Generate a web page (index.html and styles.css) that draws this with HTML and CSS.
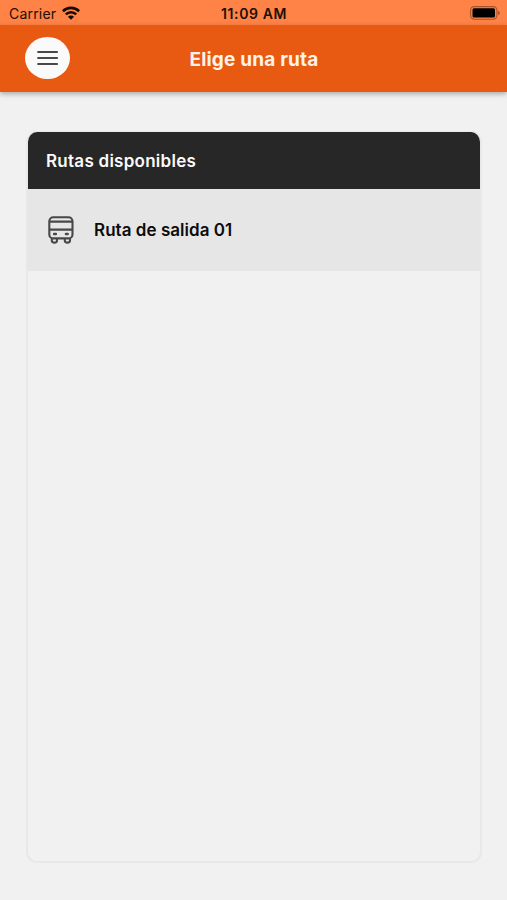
FILE: index.html
```html
<!DOCTYPE html>
<html lang="es">
<head>
<meta charset="utf-8">
<title>Elige una ruta</title>
<link rel="stylesheet" href="styles.css">
</head>
<body>
<div class="status">
  <div class="carrier"><span class="carrier-name">Carrier</span>
    <svg class="wifi" width="18" height="14" viewBox="0 0 18 14"><g fill="none" stroke="#160b05" stroke-width="2.6"><path d="M.9 5.2a11.6 11.6 0 0 1 16.2 0"/><path d="M3.8 8.4a7.4 7.4 0 0 1 10.4 0"/></g><path d="M9 13.8 5.9 10.7a4.4 4.4 0 0 1 6.2 0z" fill="#160b05"/></svg>
  </div>
  <span class="time">11:09 AM</span>
  <svg class="battery" width="31" height="14" viewBox="0 0 31 14"><rect x=".6" y=".6" width="26.3" height="12.6" rx="3.6" fill="none" stroke="#a6532c" stroke-width="1.1"/><rect x="2.5" y="2.2" width="22.5" height="9.4" rx="1.5" fill="#000"/><path d="M28 4.7q1.9.8 1.9 2.2t-1.9 2.2z" fill="#a6532c"/></svg>
</div>
<header class="bar">
  <button class="menu" aria-label="Menú"><svg width="23" height="16" viewBox="0 0 23 16"><path d="M2.2 2h18.8M2.2 8h18.8M2.2 14h18.8" stroke="#484848" stroke-width="2.2" stroke-linecap="round"/></svg></button>
  <h1 class="title"><span>Elige una ruta</span></h1>
</header>
<main class="card">
  <h2 class="card-head"><span>Rutas disponibles</span></h2>
  <div class="route">
    <svg class="bus" width="26" height="28" viewBox="0 0 26 28" fill="none" stroke="#484848" stroke-width="2.1"><rect x="1.3" y="1.2" width="23.2" height="21.2" rx="4"/><path d="M1.2 5.6h23.6M1.2 13.6h23.6"/><path d="M3.8 22.4v2.2q0 2 2 2h1.2q2 0 2-2v-2.2M16.8 22.4v2.2q0 2 2 2H20q2 0 2-2v-2.2"/><path d="M6.2 18h1.6M18 18h1.6" stroke-width="2.6" stroke-linecap="round"/></svg>
    <span class="route-name">Ruta de salida 01</span>
  </div>
</main>
</body>
</html>
```
FILE: styles.css
```css
* { box-sizing: border-box; }
body {
  margin: 0;
  height: 900px;
  display: flex;
  flex-direction: column;
  overflow: hidden;
  background: #f1f1f1;
  font-family: Inter, "Liberation Sans", sans-serif;
  white-space: nowrap;
}
h1, h2 { margin: 0; }
svg { display: block; flex: none; }
.status {
  flex: none;
  height: 25px;
  padding: 2px 6px 0 9px;
  display: grid;
  grid-template-columns: 1fr auto 1fr;
  align-items: center;
  background: #ff8246;
  color: #201008;
  font-size: 14px;
}
.carrier { display: flex; align-items: center; gap: 6px; }
.carrier-name { letter-spacing: .2px; }
.wifi { margin-top: -2px; }
.time { font-weight: 600; letter-spacing: .6px; margin-right: 2px; }
.battery { justify-self: end; margin-top: -1px; }
.bar {
  flex: none;
  height: 67px;
  padding: 0 25px;
  display: grid;
  grid-template-columns: 45px 1fr 45px;
  align-items: center;
  background: #e85a12;
  box-shadow: 0 2px 5px rgba(0, 0, 0, .3);
}
.menu {
  width: 44.5px;
  height: 42px;
  margin-top: -1px;
  padding: 0;
  border: 0;
  border-radius: 50%;
  background: #fafafa;
  display: grid;
  place-items: center;
}
.title {
  padding: 1px 0 0 1px;
  text-align: center;
  color: #fff3e8;
  font-size: 19px;
  font-weight: 650;
  letter-spacing: .18px;
}
.card {
  flex: none;
  height: 732px;
  margin: 39px 25px 0 26px;
  border: 2px solid #e8e8e8;
  border-top-width: 1px;
  border-radius: 11px;
  overflow: hidden;
}
.card-head {
  height: 57px;
  padding-left: 18px;
  display: flex;
  align-items: center;
  background: #272727;
  color: #fafafa;
  font-size: 17px;
  font-weight: 600;
  letter-spacing: .26px;
}
.route {
  height: 82px;
  padding-left: 20px;
  display: flex;
  align-items: center;
  gap: 20px;
  background: #e6e6e6;
  color: #0c0c0c;
}
.route-name { font-size: 17px; font-weight: 600; letter-spacing: .04px; }
```
